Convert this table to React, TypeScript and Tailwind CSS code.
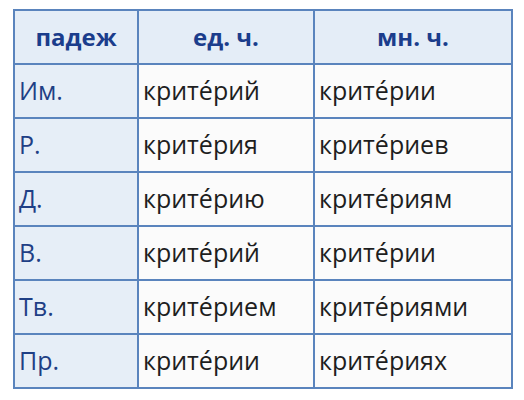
const rows: [string, string, string][] = [
  ["Им.", "крите\u0301рий", "крите\u0301рии"],
  ["Р.", "крите\u0301рия", "крите\u0301риев"],
  ["Д.", "крите\u0301рию", "крите\u0301риям"],
  ["В.", "крите\u0301рий", "крите\u0301рии"],
  ["Тв.", "крите\u0301рием", "крите\u0301риями"],
  ["Пр.", "крите\u0301рии", "крите\u0301риях"],
];

export default function App() {
  return (
    <div className="w-[524px] h-[400px] bg-white pt-[9px] pl-[13px]" style={{ fontFamily: '"Open Sans", sans-serif' }}>
      <table className="border-collapse border-2 border-[#5a84bd] table-fixed">
        <colgroup>
          <col className="w-[124px]" />
          <col className="w-[176px]" />
          <col className="w-[198px]" />
        </colgroup>
        <thead>
          <tr className="h-[54px] bg-[#e4edf7] text-[#1b3d8c] text-[24px] font-bold">
            <th className="border-2 border-[#5a84bd] text-center">падеж</th>
            <th className="border-2 border-[#5a84bd] text-center">ед. ч.</th>
            <th className="border-2 border-[#5a84bd] text-center">мн. ч.</th>
          </tr>
        </thead>
        <tbody>
          {rows.map(([c, s, p]) => (
            <tr key={c} className="h-[54px] text-[25px] leading-none">
              <td className="border-2 border-[#5a84bd] bg-[#e6eef7] text-[#1f3f85] px-[4px] pb-[2px]">{c}</td>
              <td className="border-2 border-[#5a84bd] bg-[#fbfbfb] text-[#1e1e1e] px-[4px] pb-[2px]">{s}</td>
              <td className="border-2 border-[#5a84bd] bg-[#fbfbfb] text-[#1e1e1e] px-[4px] pb-[2px]">{p}</td>
            </tr>
          ))}
        </tbody>
      </table>
    </div>
  );
}
